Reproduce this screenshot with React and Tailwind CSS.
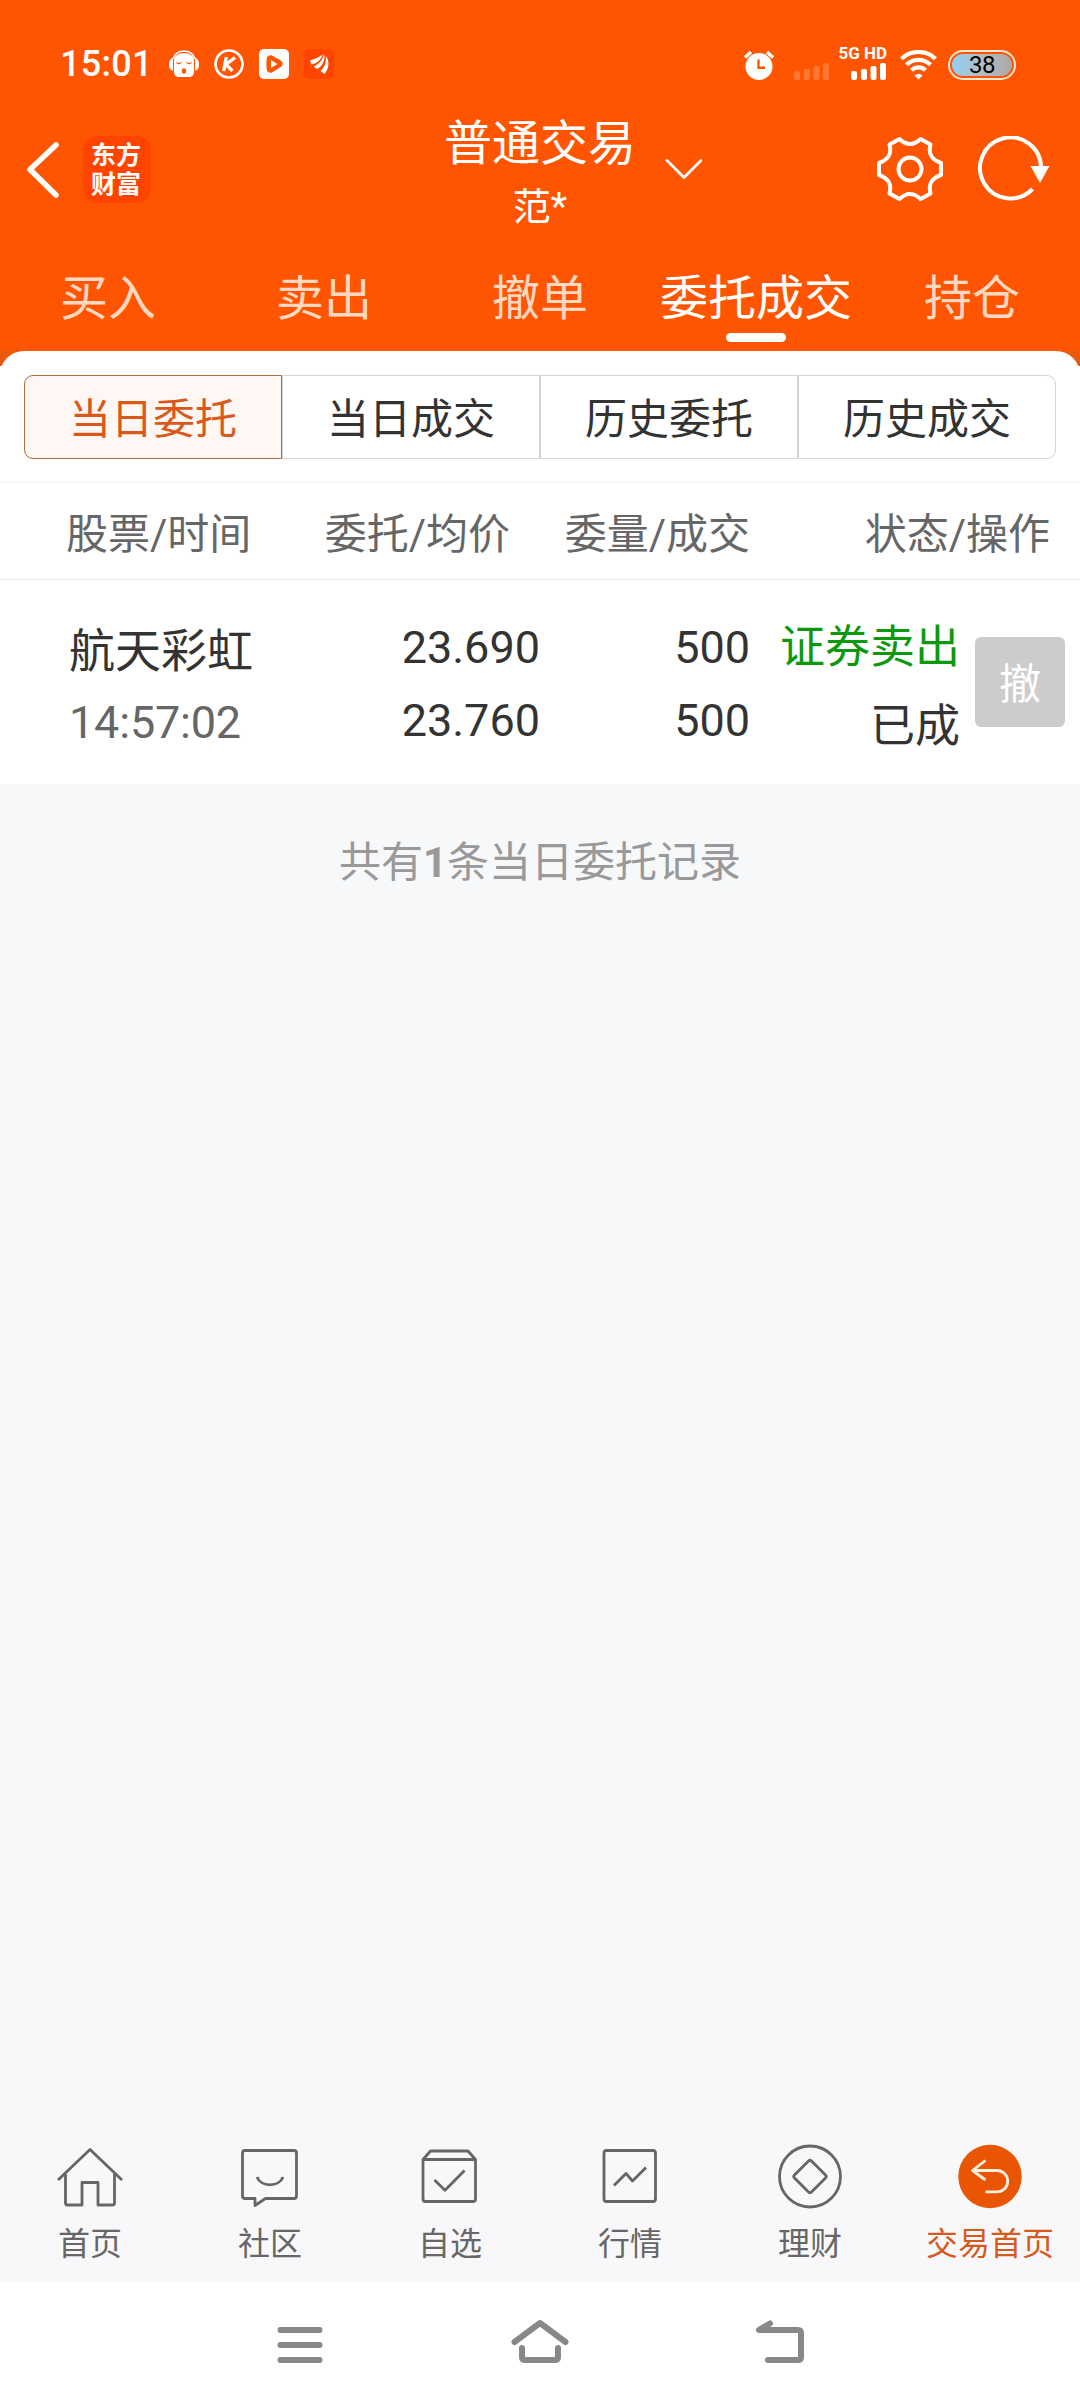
import React from 'react';

const FONT = "font-['Roboto','Noto_Sans_CJK_SC',sans-serif]";

const TABS = ['买入', '卖出', '撤单', '委托成交', '持仓'];
const SEGMENTS = ['当日委托', '当日成交', '历史委托', '历史成交'];

const ORDERS = [
  {
    name: '航天彩虹',
    time: '14:57:02',
    price: '23.690',
    avg: '23.760',
    qty: '500',
    filled: '500',
    side: '证券卖出',
    status: '已成',
  },
];

const SignalBars = ({ className }) => (
  <svg width="36" height="17" viewBox="0 0 36 17" fill="currentColor" className={className}>
    <rect x="0" y="8" width="6" height="9" rx="2" />
    <rect x="10" y="6" width="6" height="11" rx="2" />
    <rect x="19.5" y="3" width="6" height="14" rx="2" />
    <rect x="29" y="0" width="6" height="17" rx="2" />
  </svg>
);

const StatusBar = () => (
  <div className="flex h-[104px] items-start justify-between pt-[49px] pl-[60px] pr-[64px] text-white">
    <div className="flex h-[30px] items-center">
      <span className="w-[108px] text-[36px] leading-[30px] font-medium tracking-[0.3px]">15:01</span>
      {/* singing head */}
      <svg width="32" height="30" viewBox="0 0 32 30" className="mr-[14px]">
        <path d="M5 10C7 4 11 2 16 2s9 2 11 8" fill="none" stroke="#fff" strokeWidth="1.6" />
        <path d="M5 8.500C2 10 1 12 1 15.500s1 5.500 4 6.500zM27 8.500c3 1.500 4 3.500 4 7s-1 5.500-4 6.500z" fill="#fff" />
        <path d="M6 12c0-5 4-8 10-8s10 3 10 8v11c0 3-2 5-5 5H11c-3 0-5-2-5-5z" fill="#fff" />
        <path d="M8.500 13.500q2.500 2 5 0M18.500 13.500q2.500 2 5 0" fill="none" stroke="#ff5500" strokeWidth="1.300" />
        <ellipse cx="16" cy="22" rx="2.200" ry="2.800" fill="#ff5500" />
      </svg>
      <svg width="30" height="30" viewBox="0 0 30 30" fill="none" stroke="#fff" className="mr-[15px]">
        <circle cx="15" cy="15" r="13.500" strokeWidth="2.700" />
        <path d="M12.300 8 9.700 22M21 8.500 12 15.500l6.500 6.500" strokeWidth="3.400" />
      </svg>
      <svg width="30" height="30" viewBox="0 0 30 30" className="mr-[15px]">
        <rect width="30" height="30" rx="5" fill="#fff" />
        <path d="M8.500 7.500 12 6l10.500 6c1.500 1 1.500 4.500 0 5.500L12 24l-3.500-1.500C7 20 7 10 8.500 7.500z" fill="#ff5500" />
        <path d="M12 11v8l6.500-4z" fill="#fff" />
      </svg>
      <svg width="30" height="30" viewBox="0 0 30 30">
        <rect width="30" height="30" rx="5" fill="#ff4400" />
        <path d="M6 11.500C10 10.500 15 8.500 18.500 5.500 17.500 10 13 15 7.500 15.500z" fill="#fff" />
        <path d="M20 5C22 10 18 18.500 12.500 20L10 17.500C15 15 18.500 11 20 5z" fill="#fff" />
        <path d="M21.800 7C26 12 25 20 20.500 25L16.500 22C20.500 18 22.500 13.500 21.800 7z" fill="#fff" />
      </svg>
    </div>

    <div className="flex h-[31px] items-end">
      <svg width="30" height="30" viewBox="0 0 30 30" className="mr-[20px]">
        <circle cx="15" cy="16.500" r="13.500" fill="#fff" />
        <path d="M1 7.500 7 2M29 7.500 23 2" stroke="#fff" strokeWidth="3.400" />
        <path d="M14.500 9.500v8.300h6.500" fill="none" stroke="#ff5500" strokeWidth="2.400" />
      </svg>
      <SignalBars className="mr-[9px] text-[#ff7835]" />
      <div className="mr-[13px] flex w-[48px] flex-col items-end">
        <span className="mb-[3px] text-[17px] leading-[13px] font-bold whitespace-nowrap">5G HD</span>
        <SignalBars />
      </div>
      <svg width="37" height="30" viewBox="0 0 37 30" fill="none" stroke="#fff" strokeWidth="4.200" className="mr-[11px]">
        <path d="M1.500 8.800a24.500 24.500 0 0 1 34 0" />
        <path d="M6.500 14.800a17 17 0 0 1 24 0" />
        <path d="M11.500 20.300a10 10 0 0 1 14 0" />
        <path d="M14.500 25.500a5.500 5.500 0 0 1 8 0l-4 4z" fill="#fff" stroke="none" />
      </svg>
      <div className="flex h-[30px] w-[68px] rounded-full border-2 border-[#ffe6d2] p-[2px]">
        <div className="flex flex-1 items-center justify-center rounded-full bg-gradient-to-r from-[#8fd0f5] via-[#b4bcc2] to-[#a9a9a9] text-[24px] leading-none tracking-[-0.5px] text-black">
          38
        </div>
      </div>
    </div>
  </div>
);

const TitleBar = () => (
  <div className="grid h-[130px] grid-cols-[1fr_auto_1fr] items-start">
    <div className="flex pt-[32px] pl-[26px]">
      <svg width="57" height="68" viewBox="0 0 57 68" fill="none" stroke="#fff" strokeWidth="5.500" strokeLinecap="round" strokeLinejoin="round">
        <path d="M30 9 4 33.500 30 59" />
      </svg>
      <div className="flex h-[67px] w-[68px] flex-col items-center justify-center rounded-[14px] bg-[#ff4400] pr-[2px] text-[25px] leading-[29px] font-bold text-white">
        <span>东方</span>
        <span>财富</span>
      </div>
    </div>
    <div className="flex flex-col items-center text-white">
      <span className="h-[74px] text-[48px] leading-[80px]">普通交易</span>
      <span className="h-[54px] text-[38px] leading-[58px]">范*</span>
    </div>
    <div className="flex pt-[32px]">
      <svg width="38" height="22" viewBox="0 0 38 22" fill="none" stroke="#fff" strokeWidth="2.800" strokeLinecap="round" strokeLinejoin="round" className="mt-[22px] ml-[28px]">
        <path d="M3 2.500 20 19.500 37 2.500" />
      </svg>
      <svg width="68" height="68" viewBox="0 0 68 68" fill="none" stroke="#fff" strokeWidth="4" strokeLinejoin="round" className="ml-[174px]">
        <path d="M23.500 3Q34 13 44.500 3L54.500 8.500C52 18 55.500 23.500 65 27V39C55.500 42.500 52 48 54.500 57.500L44.500 63Q34 53 23.500 63L13.500 57.500C16 48 12.500 42.500 3 39V27C12.500 23.500 16 18 13.500 8.500Z" />
        <circle cx="34" cy="33" r="11.500" />
      </svg>
      <svg width="74" height="68" viewBox="0 0 74 68" className="ml-[32px]">
        <path d="M56.500 53A30.500 30.500 0 1 1 65 32" fill="none" stroke="#fff" strokeWidth="4" />
        <path d="M54.500 30h19l-9.500 17z" fill="#fff" />
      </svg>
    </div>
  </div>
);

const TradeTabs = ({ active }) => (
  <div className="grid h-[117px] grid-cols-5 text-center text-[48px] leading-[130px]">
    {TABS.map((tab, i) => (
      <div key={tab} className={`flex flex-col items-center ${i === active ? 'text-white' : 'text-[#ffd8c2]'}`}>
        <span className="h-[99px] whitespace-nowrap">{tab}</span>
        {i === active && <span className="h-[9px] w-[60px] rounded-full bg-white" />}
      </div>
    ))}
  </div>
);

const Segments = ({ active }) => (
  <div className="flex h-[131px] px-[24px] pt-[24px]">
    {SEGMENTS.map((label, i) => (
      <div
        key={label}
        className={`h-[84px] flex-1 border text-center text-[42px] leading-[88px] first:rounded-l-[9px] last:rounded-r-[9px] ${
          i === active ? 'border-[#b06a3e] bg-[#fff7f4] text-[#d9581a]' : 'border-[#d4d6d6] text-[#333]'
        }`}
      >
        {label}
      </div>
    ))}
  </div>
);

const OrderTable = () => (
  <div className="bg-white">
    <div className="flex h-[98px] border-y border-t-[#f4f4f4] border-b-[#eaeaea] text-[42px] leading-[103px] text-[#666]">
      <span className="w-[300px] pl-[66px]">股票/时间</span>
      <span className="w-[210px] text-right">委托/均价</span>
      <span className="w-[240px] text-right">委量/成交</span>
      <span className="w-[300px] text-right">状态/操作</span>
    </div>
    {ORDERS.map((order) => (
      <div key={order.time} className="flex h-[204px] text-[45px] text-[#333]">
        <div className="flex w-[300px] flex-col pt-[36px] pl-[69px]">
          <span className="h-[71px] text-[46px] leading-[70px]">{order.name}</span>
          <span className="leading-[72px] tracking-[-0.2px] text-[#666]">{order.time}</span>
        </div>
        <div className="flex w-[240px] flex-col pt-[32px] text-right">
          <span className="h-[73px] leading-[72px]">{order.price}</span>
          <span className="leading-[72px]">{order.avg}</span>
        </div>
        <div className="flex w-[210px] flex-col pt-[32px] text-right">
          <span className="h-[73px] leading-[72px]">{order.qty}</span>
          <span className="leading-[72px]">{order.filled}</span>
        </div>
        <div className="flex w-[210px] flex-col pt-[32px] text-right">
          <span className="h-[79px] leading-[72px] text-[#0d990d]">{order.side}</span>
          <span className="leading-[72px]">{order.status}</span>
        </div>
        <div className="mt-[57px] ml-[15px] h-[90px] w-[90px] rounded-[6px] bg-[#ccc] text-center text-[42px] leading-[95px] text-white">
          撤
        </div>
      </div>
    ))}
  </div>
);

const NAV_ITEMS = [
  {
    label: '首页',
    icon: (
      <>
        <path d="M4 40 36 9.500 68 40" />
        <path d="M11.500 34v29q0 2 2 2H28V42.500H44V65h14.500q2 0 2-2V34" />
      </>
    ),
  },
  {
    label: '社区',
    icon: (
      <>
        <path d="M11 10.500H60q2.500 0 2.500 2.500V56q0 2.500-2.500 2.500H31.500L21 65.500V58.500H11Q8.500 58.500 8.500 56V13Q8.500 10.500 11 10.500Z" />
        <path d="M23 37C27 47.500 45 47.500 49 37" />
      </>
    ),
  },
  {
    label: '自选',
    icon: (
      <>
        <path d="M9 19.500 16.500 11H54L61.500 19.500V59q0 2.500-2.500 2.500H11.500Q9 61.500 9 59ZM9 19.500H61.500" />
        <path d="M20.500 40 31 50.300 50.500 30.500" />
      </>
    ),
  },
  {
    label: '行情',
    icon: (
      <>
        <rect x="10" y="10.500" width="51.500" height="51" rx="2.500" />
        <path d="M20 45.500 32 33.500 38.500 41 52 27.500" />
      </>
    ),
  },
  {
    label: '理财',
    icon: (
      <>
        <circle cx="36" cy="36.500" r="30.500" />
        <path d="M34.500 21Q36 19.500 37.500 21L51.500 35Q53 36.500 51.500 38L37.500 52Q36 53.500 34.500 52L20.500 38Q19 36.500 20.500 35Z" />
      </>
    ),
  },
  {
    label: '交易首页',
    active: true,
    icon: (
      <>
        <circle cx="36" cy="36.500" r="31.700" fill="#ea5504" stroke="none" />
        <path d="M31.500 20.500 18.500 30.500 31.500 40M18.500 30.500H43a10.700 10.700 0 0 1 0 21.400H31.500" stroke="#fff0e0" />
      </>
    ),
  },
];

const BottomNav = () => (
  <div className="grid h-[142px] grid-cols-6 bg-[#f8f8fa]">
    {NAV_ITEMS.map((item) => (
      <div key={item.label} className="flex flex-col items-center">
        <svg width="72" height="72" viewBox="0 0 72 72" fill="none" stroke="#666" strokeWidth="2.800" strokeLinejoin="round">
          {item.icon}
        </svg>
        <span className={`h-[70px] text-[32px] leading-[65px] ${item.active ? 'text-[#d65a1c]' : 'text-[#666]'}`}>
          {item.label}
        </span>
      </div>
    ))}
  </div>
);

const SystemNav = () => (
  <div className="flex h-[126px] justify-center gap-[180px] bg-white pt-[33px]">
    <svg width="60" height="60" viewBox="0 0 60 60" fill="none" stroke="#888" strokeWidth="6" strokeLinecap="round">
      <path d="M10.500 15H49.500M10.500 30H49.500M10.500 45H49.500" />
    </svg>
    <svg width="60" height="60" viewBox="0 0 60 60" fill="none" stroke="#888" strokeWidth="6" strokeLinecap="round" strokeLinejoin="round">
      <path d="M4.500 27 30 8 55.500 27" />
      <path d="M12 33v9q0 3 3 3H45q3 0 3-3V33" />
    </svg>
    <svg width="60" height="60" viewBox="0 0 60 60" fill="none" stroke="#888" strokeWidth="6" strokeLinecap="round" strokeLinejoin="round">
      <path d="M20 8.500 9 15H48q3 0 3 3V42q0 3-3 3H18" />
    </svg>
  </div>
);

const App = () => (
  <div className={`flex h-[2408px] w-[1080px] flex-col overflow-hidden bg-[#f7f8fa] ${FONT}`}>
    <div className="bg-[#ff5500]">
      <StatusBar />
      <TitleBar />
      <TradeTabs active={3} />
    </div>
    <div className="bg-gradient-to-b from-[#e85a0a] from-[15px] to-white to-[15px]">
      <div className="rounded-t-[24px] bg-white">
        <Segments active={0} />
      </div>
    </div>
    <OrderTable />
    <p className="flex-1 pt-[43px] text-center text-[42px] leading-[72px] text-[#999]">
      共有<span className="font-bold">1</span>条当日委托记录
    </p>
    <BottomNav />
    <SystemNav />
  </div>
);

export default App;
